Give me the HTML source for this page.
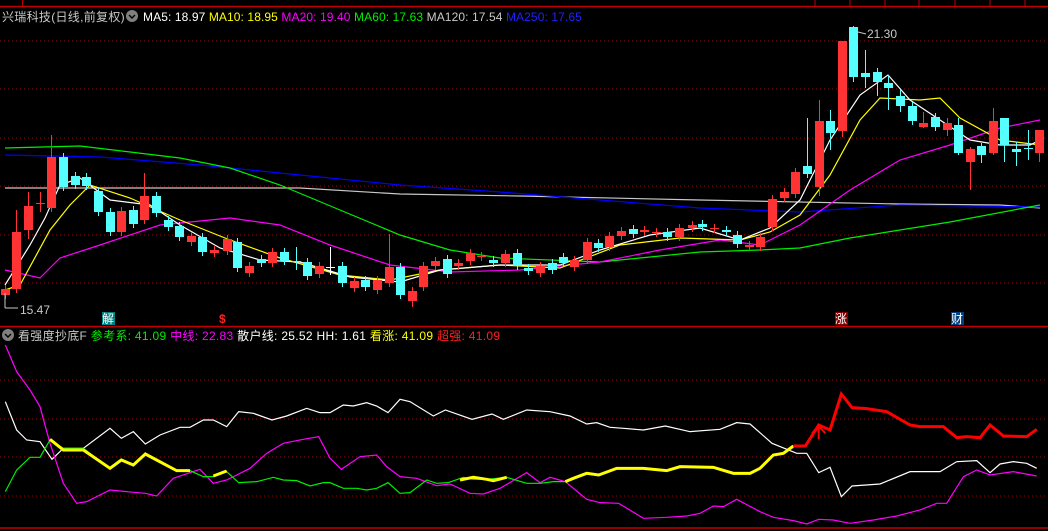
<!DOCTYPE html>
<html><head><meta charset="utf-8"><style>
html,body{margin:0;padding:0;background:#000;width:1048px;height:531px;overflow:hidden}
svg{display:block}
text{font-family:"Liberation Sans","Noto Sans CJK SC",sans-serif;font-size:12px}
</style></head><body>
<svg id="s" width="1048" height="531" viewBox="0 0 1048 531" xmlns="http://www.w3.org/2000/svg">
<rect width="1048" height="531" fill="#000"/>
<line x1="0" y1="6.5" x2="1048" y2="6.5" stroke="#c00000" stroke-width="1.5"/>
<line x1="22.5" y1="0" x2="22.5" y2="6" stroke="#c00000"/>
<g stroke="#c00000"><line x1="815" y1="0" x2="815" y2="6"/><line x1="850" y1="0" x2="850" y2="6"/><line x1="885" y1="0" x2="885" y2="6"/><line x1="919" y1="0" x2="919" y2="6"/><line x1="955" y1="0" x2="955" y2="6"/><line x1="990" y1="0" x2="990" y2="6"/><line x1="1025" y1="0" x2="1025" y2="6"/></g>
<g stroke="#a00000" stroke-dasharray="1,3"><line x1="0" y1="41" x2="1048" y2="41"/><line x1="0" y1="89" x2="1048" y2="89"/><line x1="0" y1="138" x2="1048" y2="138"/><line x1="0" y1="186" x2="1048" y2="186"/><line x1="0" y1="235" x2="1048" y2="235"/><line x1="0" y1="283" x2="1048" y2="283"/>
<line x1="0" y1="380" x2="1048" y2="380"/><line x1="0" y1="419" x2="1048" y2="419"/><line x1="0" y1="457" x2="1048" y2="457"/><line x1="0" y1="496" x2="1048" y2="496"/></g>
<line x1="0" y1="326.5" x2="1048" y2="326.5" stroke="#c00000" stroke-width="1.5"/>
<line x1="0" y1="528" x2="1048" y2="528" stroke="#c00000" stroke-width="1.5"/>
<g fill="none" stroke-width="1.2">
<polyline stroke="#c8c8c8" points="5,188 300,188 400,194 520,196 700,200 900,204 1000,205 1040,208"/>
<polyline stroke="#0000ff" points="5,155 100,157 200,165 300,175 400,185 500,192 600,200 700,208 800,212 900,205 1040,207"/>
<polyline stroke="#00ee00" points="5,148 80,146 180,158 230,168 280,185 340,210 400,235 450,250 500,258 600,262 700,252 760,250 800,248 850,238 950,222 1040,205"/>
<polyline stroke="#ff00ff" points="5,270 40,278 60,258 100,245 160,225 230,218 280,225 330,245 390,265 450,272 520,270 600,262 660,250 720,240 760,245 800,225 850,190 900,160 950,145 1000,128 1040,120"/>
<polyline stroke="#ffff00" points="5,290 20,285 50,230 70,205 90,185 130,198 180,220 230,240 280,258 340,275 390,280 440,270 500,265 560,268 620,245 680,238 740,240 770,232 800,215 830,175 860,120 880,98 920,100 940,98 960,118 1000,140 1040,145"/>
<polyline stroke="#ffffff" points="5,285 30,245 45,218 60,185 80,178 110,200 150,205 180,225 220,248 260,260 300,262 350,277 400,282 440,270 500,265 560,265 600,250 650,235 700,228 740,240 770,228 800,200 830,140 860,95 888,75 910,100 940,120 970,140 1000,145 1030,145 1040,140"/>
</g>
<g id="candles"></g>
<g stroke="#c8c8c8" fill="none"><line x1="5" y1="308" x2="5" y2="293"/><line x1="5" y1="308" x2="18" y2="308"/><line x1="858" y1="32" x2="866" y2="34"/></g>
<text x="20" y="314" fill="#c8c8c8" font-size="13">15.47</text>
<text x="867" y="38" fill="#c8c8c8" font-size="13">21.30</text>
<rect x="102" y="312" width="13" height="13" fill="#008080"/><text x="102" y="323" fill="#fff" font-size="12">解</text>
<text x="219" y="323" fill="#ff2020" font-size="12" font-weight="bold">$</text>
<rect x="835" y="312" width="13" height="13" fill="#800000"/><text x="835" y="323" fill="#fff" font-size="12">涨</text>
<rect x="951" y="312" width="13" height="13" fill="#003f7f"/><text x="951" y="323" fill="#fff" font-size="12">财</text>
<text x="2" y="21" fill="#c8c8c8" font-size="13" letter-spacing="0.3">兴瑞科技(日线,前复权)</text>
<circle cx="132" cy="16" r="6" fill="#808080"/><path d="M129 15 L132 18 L135 15" stroke="#000" fill="none" stroke-width="1.4"/>
<text x="143" y="21" font-size="13" letter-spacing="0.1"><tspan fill="#fff">MA5: 18.97 </tspan><tspan fill="#ffff00">MA10: 18.95 </tspan><tspan fill="#ff00ff">MA20: 19.40 </tspan><tspan fill="#00ee00">MA60: 17.63 </tspan><tspan fill="#c8c8c8">MA120: 17.54 </tspan><tspan fill="#2020ff">MA250: 17.65</tspan></text>
<circle cx="8" cy="335" r="6" fill="#808080"/><path d="M5 334 L8 337 L11 334" stroke="#000" fill="none" stroke-width="1.4"/>
<text x="18" y="340" font-size="13" letter-spacing="0.3"><tspan fill="#c8c8c8">看强度抄底F </tspan><tspan fill="#00ee00">参考系: 41.09 </tspan><tspan fill="#ff00ff">中线: 22.83 </tspan><tspan fill="#fff">散户线: 25.52 HH: 1.61 </tspan><tspan fill="#ffff00">看涨: 41.09 </tspan><tspan fill="#ff2020">超强: 41.09</tspan></text>
<g transform="translate(0,340) scale(0.6667,0.3333)" fill="none">
<polyline vector-effect="non-scaling-stroke" stroke="#fff" stroke-width="1.2" points="8,185 25,270 40,300 60,305 78,358 95,325 125,325 165,265 182,295 200,275 218,312 240,285 270,262 285,262 305,240 320,240 340,260 358,215 380,220 408,240 430,228 460,205 480,218 495,218 515,195 530,198 550,188 565,198 582,218 600,178 615,185 650,228 668,210 708,238 738,222 755,238 790,210 825,215 855,228 880,252 895,248 915,262 935,265 965,270 998,258 1035,275 1080,268 1105,248 1125,252 1158,310 1195,340 1210,340 1228,398 1245,382 1262,470 1278,438 1320,432 1365,395 1410,395 1435,365 1465,362 1485,398 1500,372 1520,365 1540,370 1555,385"/>
<polyline vector-effect="non-scaling-stroke" stroke="#ff00ff" stroke-width="1.2" points="8,15 25,95 45,150 60,200 75,310 95,430 115,490 130,485 165,450 190,455 218,460 235,468 260,415 275,405 300,388 320,430 340,420 375,385 400,340 425,310 455,298 478,290 495,355 512,388 540,350 565,345 580,380 600,410 625,415 655,437 675,432 705,460 725,462 750,445 790,398 810,428 825,412 848,425 880,478 900,488 928,490 965,535 1000,532 1030,528 1050,520 1070,498 1085,500 1105,478 1140,515 1160,532 1190,542 1210,552 1228,538 1250,540 1275,550 1310,540 1345,528 1380,510 1405,490 1420,490 1445,410 1465,390 1485,405 1520,395 1555,408"/>
<polyline vector-effect="non-scaling-stroke" stroke="#00ee00" stroke-width="1.2" points="8,455 25,390 45,352 60,352 75,300 95,325 125,325 165,385 182,360 200,375 218,342 265,392 285,392 305,410 320,410 340,395 358,428 385,425 410,412 425,420 445,422 465,438 485,428 495,428 515,445 535,445 550,450 565,445 582,428 600,460 615,458 640,420 655,430 672,428 695,412 710,418 730,418 760,412 790,430 810,430 830,425 848,425"/>
<polyline vector-effect="non-scaling-stroke" stroke="#ffff00" stroke-width="3" points="75,298 95,330 125,330 165,385 182,360 200,375 218,342 265,392 285,392"/>
<polyline vector-effect="non-scaling-stroke" stroke="#ffff00" stroke-width="3" points="320,408 340,393"/>
<polyline vector-effect="non-scaling-stroke" stroke="#ffff00" stroke-width="3" points="690,420 710,412 730,418 740,422 760,412"/>
<polyline vector-effect="non-scaling-stroke" stroke="#ffff00" stroke-width="3" points="848,425 860,415 880,400 898,405 925,385 965,385 1000,392 1020,380 1070,382 1100,400 1125,400 1140,385 1160,345 1175,340 1190,318"/>
<polyline vector-effect="non-scaling-stroke" stroke="#ff0000" stroke-width="3" points="1190,318 1208,318 1228,255 1245,270 1262,162 1278,203 1300,206 1330,215 1365,255 1380,260 1415,260 1435,293 1450,290 1470,293 1485,255 1505,288 1540,290 1555,268"/>
<polyline vector-effect="non-scaling-stroke" stroke="#ff0000" stroke-width="2" points="1228,298 1228,258 1218,280"/>
<polyline vector-effect="non-scaling-stroke" stroke="#ff0000" stroke-width="2" points="1228,258 1238,280"/>
</g>
</svg>
<script>
var R="#ff3333",C="#55ffff",W="#fff";
var d=[[5,289,295,R],[16,232,289,R,210],[28,206,230,R,192,239],[40,203,204,R,192,212],[51,157,208,R,135],[63,157,187,C],[75,176,185,C],[86,177,186,C],[98,191,212,C],[110,212,232,C],[121,211,232,R],[133,210,224,C],[144,196,220,R,173],[156,196,213,C],[168,220,227,C],[179,226,237,C],[191,236,242,R],[202,237,252,C],[214,250,253,R],[227,239,251,R],[237,242,268,C],[249,266,273,R],[261,259,263,C],[272,252,263,R],[284,252,261,C],[296,261,262,C,247,270],[307,262,276,C],[319,266,274,R],[330,267,268,W,247,275],[342,266,283,C],[354,281,288,R],[365,280,287,C],[377,280,290,R],[389,267,283,R,234],[400,267,295,C],[412,291,301,R,287,307],[423,266,287,R],[435,261,266,R],[447,259,274,C],[458,263,266,R],[470,253,261,R],[481,256,257,R],[493,260,263,C],[505,254,263,R],[517,253,266,C],[528,268,271,C],[540,266,273,R],[552,263,270,C],[563,257,263,C],[574,260,267,R],[587,242,260,R],[598,243,248,C],[609,236,247,R],[621,231,236,R],[633,229,234,C],[644,230,232,R],[656,232,233,R],[667,232,237,C],[679,228,237,R],[692,225,228,R],[702,224,227,C],[714,228,229,R],[726,230,232,C],[737,235,244,C],[749,245,247,R],[760,237,247,R],[772,199,227,R],[784,192,198,R],[795,172,194,R],[807,166,174,C,118],[819,121,187,R,100,196],[830,121,133,C,110,150],[842,41,131,R,41,137],[853,27,77,C,26,82],[865,73,77,C,50,88],[877,72,82,C,68,96],[888,83,88,C,75,110],[900,96,106,C,90,112],[912,106,121,C],[923,123,127,R,112,128],[935,117,127,C],[947,123,130,R,118,136],[958,125,153,C,118,155],[970,149,162,R,147,190],[981,146,155,C,143,163],[993,121,153,R,108,155],[1004,118,145,C,118,162],[1016,149,152,C,142,166],[1028,148,149,C,130,160],[1039,130,153,R,130,162]];
var g=document.getElementById("candles"),h="";
d.forEach(function(c){var x=c[0],t=c[1],b=c[2],col=c[3],hi=c[4]||t-4,lo=c[5]||b+4;
h+='<line x1="'+(x+.5)+'" y1="'+hi+'" x2="'+(x+.5)+'" y2="'+lo+'" stroke="'+col+'"/>';
h+='<rect x="'+(x-4)+'" y="'+t+'" width="9" height="'+Math.max(1,b-t)+'" fill="'+col+'"/>';});
g.innerHTML=h;
</script>
</body></html>
